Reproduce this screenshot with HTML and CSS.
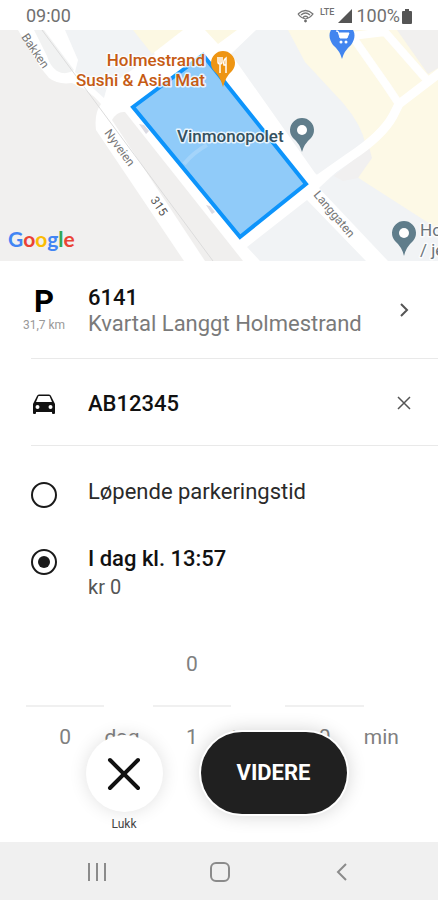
FILE: index.html
```html
<!DOCTYPE html>
<html lang="no">
<head>
    <meta charset="UTF-8">
    <meta name="viewport" content="width=device-width, initial-scale=1.0">
    <title>Parkering</title>
    <link rel="stylesheet" href="styles.css">
</head>
<body>
    <header class="status-bar">
        <span class="clock">09:00</span>
        <div class="status-icons">
            <svg class="wifi" width="17" height="14" viewBox="0 0 17 14" fill="none" stroke="#777">
                <path d="M1 5Q8.500 -2 16 5Q13 9 8.500 10Q4 9 1 5M4 6Q8.500 2 13 6M6 8.500Q8.500 6 11 8.500" stroke-width="1.200"/>
                <circle cx="8.500" cy="12" r="1" fill="#555"/>
            </svg>
            <span class="lte">LTE</span>
            <svg width="14" height="14" viewBox="0 0 14 14"><path d="M14 0v14H0z" fill="#555"/></svg>
            <span class="percent">100%</span>
            <svg width="10" height="15" viewBox="0 0 10 15"><path d="M3 0h4v2h2q1 0 1 1v11q0 1-1 1H1q-1 0-1-1V3q0-1 1-1h2z" fill="#555"/></svg>
        </div>
    </header>

    <svg class="map" viewBox="0 30 438 231" preserveAspectRatio="xMidYMid slice" role="img" aria-label="Kart">
        <rect y="30" width="438" height="231" fill="#fff"/>
        <!-- blocks -->
        <path d="M0 30H18L40 67L49 78Q58 85 72 83Q87 88 101 104Q94 113 96 130L184 261H0z" fill="#f1f0ef"/>
        <path d="M34 30H44L74 70Q66 76 57 71Q50 66 47 56z" fill="#f1f2f2"/>
        <path d="M65 30H135L155 54L107 87L104 98L75 72L78 60z" fill="#f1f3f5"/>
        <path d="M133 30H183L152 54z" fill="#fcf8e3"/>
        <path d="M205 30H237L218 44z" fill="#fcf8e3"/>
        <path d="M112 120Q117 111 125 112L243 261H205z" fill="#f0efee"/>
        <path d="M231 54L256 30H438V72L372 145L323 175Q319 178 315 173z" fill="#f1f3f5"/>
        <path d="M288 30H412L438 62V76L366 146Q362 125 343 103L305 62z" fill="#fdf9e6"/>
        <path d="M397 30H438V68L428 74z" fill="#f1f0ef"/>
        <path d="M307 200L366 261H260L247 247z" fill="#f1f3f5"/>
        <path d="M319 188L438 78V261H388z" fill="#f1f3f5"/>
        <path d="M357 177L370 145L400 108L438 78V229z" fill="#fdf9e6"/>
        <path d="M334 176L369 147L372 158L358 178L343 181z" fill="#f1f0f0"/>
        <!-- roads -->
        <g fill="none" stroke="#fff" stroke-linejoin="round">
            <path d="M306 188L350 157Q382 136 393 116L399 104L442 71" stroke-width="9"/>
            <path d="M399 104L387 86L352 36L385 32L427 80" stroke-width="8"/>
        </g>
        <path d="M42 30L213 261" stroke="#dcdcdc" fill="none"/>
        <g fill="#dcdbe3">
            <path d="M139 124l5 1 5 6-3 3zM206 205l4 1 5 6-3 2z"/>
        </g>
        <!-- parking zone -->
        <path d="M133 107L203 55L306 184L240 237z" fill="#90cbf9" stroke="#0d94fb" stroke-width="4"/>
        <path d="M184 164Q194 152 207 145" stroke="#a4d4fa" stroke-width="4" fill="none"/>

        <g class="street">
            <text transform="translate(21 37) rotate(56)">Bakken</text>
            <text transform="translate(104 133) rotate(54)">Nyveien</text>
            <text class="route" transform="translate(150 200) rotate(56)">315</text>
            <text transform="translate(313 195) rotate(50)">Langgaten</text>
        </g>

        <!-- pins -->
        <path d="M223 87Q220 76 214 71A12 12 0 1 1 232 71Q226 76 223 87z" fill="#ee9513"/>
        <path d="M218 57v5q0 2 2 2v9M220 57v6M222 57v5q0 2-2 2M226 73V58q-3 2-2 7h2" fill="none" stroke="#fff" stroke-width="1.500"/>
        <path d="M342 59Q340 51 333 45Q326 35 333 27H351Q358 35 351 45Q344 51 342 59z" fill="#4285ef"/>
        <path d="M336 31h2l2 7h7l2-5h-10" fill="#fff" stroke="#fff"/>
        <g fill="#fff"><circle cx="341" cy="42" r="1.500"/><circle cx="346" cy="42" r="1.500"/></g>
        <g fill="#607d8b">
            <path d="M302 152Q300 144 293 138A12 12 0 1 1 311 138Q304 144 302 152z"/>
            <path d="M404 256Q402 247 395 241A12 12 0 1 1 413 241Q406 247 404 256z"/>
        </g>
        <g fill="#fff"><circle cx="302" cy="130" r="5"/><circle cx="404" cy="233" r="5"/></g>

        <g class="place food" text-anchor="end">
            <text x="205" y="66">Holmestrand</text>
            <text x="205" y="86">Sushi &amp; Asia Mat</text>
        </g>
        <text class="place shop" x="177" y="142">Vinmonopolet</text>
        <text class="place other" x="420" y="236">Ho</text>
        <text class="place other" x="420" y="256">/ je</text>
        <text class="google" x="8" y="247"><tspan fill="#4285f4">G</tspan><tspan fill="#ea4335">o</tspan><tspan fill="#fbbc05">o</tspan><tspan fill="#4285f4">g</tspan><tspan fill="#34a853">l</tspan><tspan fill="#ea4335">e</tspan></text>
    </svg>

    <main class="panel">
        <section class="row zone">
            <div class="lead">
                <span class="p-sign">P</span>
                <span class="distance">31,7 km</span>
            </div>
            <div class="row-text">
                <strong>6141</strong>
                <span class="muted">Kvartal Langgt Holmestrand</span>
            </div>
            <button class="icon-button" aria-label="Velg område">
                <svg width="20" height="20" viewBox="0 0 20 20" fill="none" stroke="#555" stroke-width="2"><path d="M7 3l6 6-6 6"/></svg>
            </button>
        </section>

        <section class="row car">
            <div class="lead">
                <svg width="24" height="24" viewBox="0 0 24 24" fill="#111">
                    <path fill-rule="evenodd" d="M19 4Q18.500 2.500 17 2.500H7Q5.500 2.500 5 4L1 12v9q0 1 1 1h1q1 0 1-1v-1h16v1q0 1 1 1h1q1 0 1-1v-9zM5.500 17a2 2 0 1 1 0-4a2 2 0 1 1 0 4zM18.500 17a2 2 0 1 1 0-4a2 2 0 1 1 0 4zM4 10L6.500 4h11L20 10z"/>
                </svg>
            </div>
            <div class="row-text"><strong>AB12345</strong></div>
            <button class="icon-button" aria-label="Fjern bil">
                <svg width="20" height="20" viewBox="0 0 20 20" fill="none" stroke="#555" stroke-width="1.500"><path d="M4 3l12 12M16 3L4 15"/></svg>
            </button>
        </section>

        <section class="options">
            <label class="option">
                <input type="radio" name="tid">
                <span class="option-text">Løpende parkeringstid</span>
            </label>
            <label class="option">
                <input type="radio" name="tid" checked>
                <span class="option-text"><strong>I dag kl. 13:57</strong><span class="price">kr 0</span></span>
            </label>
        </section>

        <section class="picker">
            <div class="wheel"><span class="prev"></span><span class="value">0</span></div>
            <span class="unit">dag</span>
            <div class="wheel"><span class="prev">0</span><span class="value">1</span></div>
            <span class="unit">t</span>
            <div class="wheel"><span class="prev"></span><span class="value">0</span></div>
            <span class="unit">min</span>
        </section>

        <div class="actions">
            <div class="close">
                <button class="close-button" id="close" aria-labelledby="close-label">
                    <svg width="36" height="36" viewBox="0 0 36 36" fill="none" stroke="#111" stroke-width="4" stroke-linecap="round"><path d="M4 4l28 28M32 4L4 32"/></svg>
                </button>
                <label id="close-label" for="close">Lukk</label>
            </div>
            <button class="next-button">VIDERE</button>
        </div>
    </main>

    <nav class="nav-bar">
        <button aria-label="Nylige">
            <svg width="24" height="24" viewBox="0 0 24 24" stroke="#8b8b8b" stroke-width="2"><path d="M4 3v18M12 3v18M20 3v18"/></svg>
        </button>
        <button aria-label="Hjem">
            <svg width="24" height="24" viewBox="0 0 24 24" fill="none" stroke="#8b8b8b" stroke-width="2"><rect x="3" y="3" width="18" height="18" rx="5"/></svg>
        </button>
        <button aria-label="Tilbake">
            <svg width="24" height="24" viewBox="0 0 24 24" fill="none" stroke="#8b8b8b" stroke-width="2"><path d="M16 4l-8 8 8 8"/></svg>
        </button>
    </nav>
</body>
</html>
```
FILE: styles.css
```css
* {
    box-sizing: border-box;
}

body {
    display: flex;
    flex-direction: column;
    min-height: 100vh;
    margin: 0;
    background-color: #fff;
    color: #2a2a2a;
    font-family: Roboto, "Liberation Sans", sans-serif;
    font-size: 22px;
    line-height: 26px;
}

button {
    padding: 0;
    border: none;
    background: none;
    font: inherit;
    cursor: pointer;
}

svg {
    display: block;
}

strong {
    font-weight: 500;
    color: #111;
}

.status-bar {
    display: flex;
    justify-content: space-between;
    align-items: center;
    height: 30px;
    padding: 2px 26px 0;
    color: #707070;
    font-size: 18px;
}

.status-icons {
    display: flex;
    align-items: center;
    gap: 4px;
}

.wifi {
    margin-right: 2px;
}

.lte {
    align-self: flex-start;
    font-size: 9px;
    font-weight: 500;
    line-height: 18px;
}

.percent {
    margin-right: -2px;
}

.map {
    width: 100%;
    height: 231px;
}

.street {
    fill: #777;
    font-size: 12px;
}

.route {
    fill: #555;
}

.place {
    font-size: 17px;
    font-weight: 500;
    paint-order: stroke;
    stroke: rgba(255, 255, 255, 0.8);
    stroke-width: 3px;
    stroke-linejoin: round;
}

.food {
    fill: #c65b14;
}

.shop {
    fill: #34515f;
}

.other {
    fill: #6b747a;
    font-weight: 400;
}

.google {
    font-family: Lato, sans-serif;
    font-size: 21px;
    font-weight: 700;
}

.panel {
    position: relative;
    display: flex;
    flex: 1;
    flex-direction: column;
}

.row {
    position: relative;
    display: flex;
    align-items: center;
    padding: 2px 24px 0 0;
}

.row::after {
    content: "";
    position: absolute;
    right: 0;
    bottom: 0;
    left: 31px;
    height: 1px;
    background-color: #e9e9e9;
}

.zone {
    height: 98px;
}

.car {
    height: 87px;
}

.lead {
    display: flex;
    flex-direction: column;
    align-items: center;
    width: 88px;
}

.p-sign {
    color: #000;
    font-size: 31px;
    font-weight: 700;
    line-height: 28px;
}

.distance {
    color: #999;
    font-size: 12px;
    line-height: 18px;
}

.row-text {
    display: flex;
    flex: 1;
    flex-direction: column;
}

.muted {
    color: #7a7a7a;
}

.options {
    display: flex;
    flex-direction: column;
    gap: 38px;
    padding: 33px 31px 0;
}

.option {
    display: flex;
    gap: 31px;
}

.option input {
    appearance: none;
    display: grid;
    place-items: center;
    width: 26px;
    height: 26px;
    margin: 3px 0 0;
    border: 2px solid #1a1a1a;
    border-radius: 50%;
}

.option input:checked::before {
    content: "";
    width: 12px;
    height: 12px;
    border-radius: 50%;
    background-color: #1a1a1a;
}

.option-text {
    display: flex;
    flex-direction: column;
    gap: 2px;
}

.price {
    color: #555;
    font-size: 20px;
}

.picker {
    display: grid;
    grid-template-columns: 78fr 48fr 78fr 54fr 78fr 48fr;
    align-items: end;
    padding: 38px 26px 90px;
    color: #808080;
    font-size: 21px;
}

.wheel {
    display: flex;
    flex-direction: column;
    text-align: center;
}

.prev {
    height: 69px;
    padding-top: 13px;
    border-bottom: 2px solid #f0f0f0;
}

.value {
    padding-top: 17px;
}

.actions {
    position: absolute;
    right: 0;
    bottom: 0;
    left: 0;
    display: flex;
    justify-content: center;
    gap: 38px;
    padding: 0 6px 8px 0;
}

.close {
    display: flex;
    flex-direction: column;
    align-items: center;
    gap: 2px;
    padding-top: 3px;
    color: #444;
    font-size: 12px;
    line-height: 20px;
}

.close-button {
    display: grid;
    place-items: center;
    width: 77px;
    height: 77px;
    border-radius: 50%;
    background-color: #fff;
    box-shadow: 0 0 18px rgba(0, 0, 0, 0.12);
}

.next-button {
    width: 146px;
    height: 82px;
    border-radius: 41px;
    background-color: #202020;
    box-shadow: 0 0 0 2px #fff, 0 0 20px rgba(0, 0, 0, 0.2);
    color: #fff;
    font-size: 22px;
    font-weight: 700;
}

.nav-bar {
    display: flex;
    justify-content: space-between;
    align-items: center;
    height: 58px;
    padding: 2px 84px 0 85px;
    background-color: #f0f0f0;
}
```
